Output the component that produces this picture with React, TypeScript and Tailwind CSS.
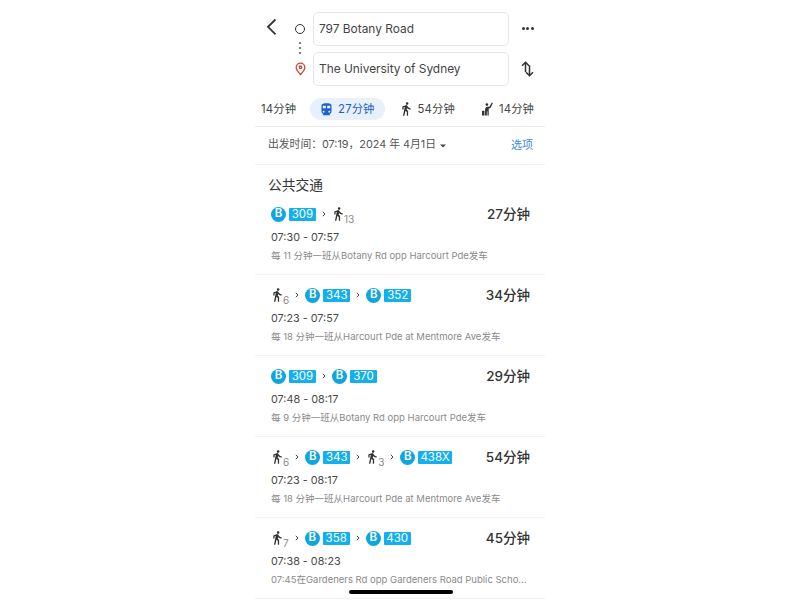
const FONT = "font-['Inter','Noto_Sans_CJK_SC',sans-serif]";

const WALK = "M13.5 5.5c1.1 0 2-.9 2-2s-.9-2-2-2-2 .9-2 2 .9 2 2 2zM9.8 8.9L7 23h2.1l1.8-8 2.1 2v6h2v-7.5l-2.1-2 .6-3C14.8 12 16.8 13 19 13v-2c-1.9 0-3.5-1-4.3-2.4l-1-1.6c-.4-.6-1-1-1.7-1-.3 0-.5.1-.8.1L6 8.3V13h2V9.6l1.8-.7";
const TRAIN = "M12 2c-4 0-8 .5-8 4v9.5C4 17.43 5.57 19 7.5 19L6 20.5v.5h12v-.5L16.5 19c1.93 0 3.5-1.57 3.5-3.5V6c0-3.5-3.58-4-8-4zM7.5 17c-.83 0-1.5-.67-1.5-1.5S6.67 14 7.5 14s1.5.67 1.5 1.5S8.33 17 7.5 17zm3.5-7H6V6h5v4zm2 0V6h5v4h-5zm3.5 7c-.83 0-1.5-.67-1.5-1.5s.67-1.5 1.5-1.5 1.5.67 1.5 1.5-.67 1.5-1.5 1.5z";

function Walk({ className = "" }: { className?: string }) {
  return (
    <svg width="9" height="14" viewBox="5.5 1 14 22.500" fill="#333" preserveAspectRatio="none" className={`shrink-0 ${className}`}>
      <path d={WALK} />
    </svg>
  );
}

function Hail() {
  return (
    <svg width="11" height="14" viewBox="3 1 18 22.500" fill="#333" className="shrink-0">
      <circle cx="11" cy="5" r="2.2" />
      <path d="M19 1.5l1.8.8-3.4 7.6c-.5 1-1.4 1.6-2.5 1.6H14V23h-2v-7h-1v7H8v-9.5c0-2.2 1.3-5 3.5-5h3l.8-.3z" />
      <rect x="3" y="15" width="4" height="8" rx=".6" />
    </svg>
  );
}

function Chevron() {
  return (
    <svg width="4" height="6" viewBox="0 0 4 6" fill="none" stroke="#444" strokeWidth="1" className="shrink-0">
      <path d="M.8 .8 3 3 .8 5.200" />
    </svg>
  );
}

function Bus({ line }: { line: string }) {
  return (
    <div className="flex items-center gap-[3px]">
      <span className="flex h-[15px] w-[15px] items-center justify-center rounded-full bg-[#0fa5e0] text-[11.5px] font-semibold leading-none text-white">B</span>
      <span className="flex h-[13px] min-w-[27px] items-center justify-center rounded-[1px] bg-[#12b0ee] px-[2px] pt-[1px] text-[11.5px] leading-none text-white">{line}</span>
    </div>
  );
}

function WalkStep({ mins }: { mins: string }) {
  return (
    <div className="flex items-start pl-[2px]">
      <Walk className="mt-[2px]" />
      <span className="ml-[1px] mt-[9px] text-[10px] leading-[10px] text-[#8a8a8a]">{mins}</span>
    </div>
  );
}

type Step = { bus: string } | { walk: string };

function Route({ steps, dur, time, sub }: { steps: Step[]; dur: string; time: string; sub: string }) {
  return (
    <div className="h-[81px] shrink-0 border-b border-[#f3f3f3] pl-[16px] pr-[15px]">
      <div className="flex h-[35px] items-center justify-between pt-[5px]">
        <div className="flex items-center gap-[6px]">
          {steps.map((s, i) => (
            <div key={i} className="flex items-center gap-[6px]">
              {i > 0 && <Chevron />}
              {"bus" in s ? <Bus line={s.bus} /> : <WalkStep mins={s.walk} />}
            </div>
          ))}
        </div>
        <span className="mt-[2px] text-[13.5px] font-medium leading-none text-[#333]">{dur}</span>
      </div>
      <div className="text-[10.8px] leading-[18px] text-[#4a4a4a]">{time}</div>
      <div className="mt-[1px] whitespace-nowrap text-[9.5px] leading-[16px] text-[#8a8a8a]">{sub}</div>
    </div>
  );
}

function Field({ value }: { value: string }) {
  return (
    <div className="flex h-[34px] w-[196px] items-center rounded-[5px] border border-[#e6e6e6] pl-[5px] text-[11.9px] text-[#444]">
      {value}
    </div>
  );
}

export default function App() {
  return (
    <div className={`flex h-[600px] w-full justify-center overflow-hidden bg-white ${FONT}`}>
      <div className="relative flex h-[600px] w-[290px] flex-col overflow-hidden">
        <div className="flex h-[98px] shrink-0 pt-[12px]">
          <div className="flex w-[32px] justify-end pt-[6px]">
            <svg width="14" height="18" viewBox="0 0 14 18" fill="none" stroke="#333" strokeWidth="1.8" className="mr-[8px]">
              <path d="M10.5 1.5 3 8.800l7.500 7.500" />
            </svg>
          </div>
          <div className="flex w-[26px] flex-col items-center">
            <div className="mt-[12px] h-[10px] w-[10px] rounded-full border-[1.5px] border-[#333]" />
            <div className="mt-[8px] flex flex-col items-center gap-[3px]">
              <span className="h-[2px] w-[2px] rounded-full bg-[#555]" />
              <span className="h-[2px] w-[2px] rounded-full bg-[#555]" />
              <span className="h-[2px] w-[2px] rounded-full bg-[#555]" />
            </div>
            <svg width="11" height="14" viewBox="0 0 11 13" fill="none" stroke="#d3413a" strokeWidth="1.3" className="mt-[8px]">
              <path d="M5.5 12C3.4 9.700 1.200 7.400 1.200 4.900a4.300 4.300 0 0 1 8.600 0c0 2.500-2.200 4.800-4.300 7.100z" />
              <circle cx="5.500" cy="4.800" r="1.300" />
            </svg>
          </div>
          <div className="flex flex-col gap-[6px]">
            <Field value="797 Botany Road" />
            <Field value="The University of Sydney" />
          </div>
          <div className="flex flex-1 flex-col items-center pl-[1px]">
            <div className="mt-[15px] flex gap-[1.5px]">
              <span className="h-[3px] w-[3px] rounded-full bg-[#333]" />
              <span className="h-[3px] w-[3px] rounded-full bg-[#333]" />
              <span className="h-[3px] w-[3px] rounded-full bg-[#333]" />
            </div>
            <svg width="13" height="16" viewBox="0 0 13 16" fill="none" stroke="#333" strokeWidth="1.5" className="mt-[31px]">
              <path d="M4.500 11V1.500M1 4.800l3.500-3.500L8 4.800M8.500 4.500v10M5 11.200l3.500 3.500 3.500-3.500" />
            </svg>
          </div>
        </div>

        <div className="flex h-[29px] shrink-0 items-start border-b border-[#ececec] pl-[6px] text-[11.3px] tracking-[0.15px] text-[#444]">
          <div className="flex h-[22px] items-center">14分钟</div>
          <div className="ml-[14px] flex h-[22px] items-center gap-[4px] rounded-full bg-[#e8f0fb] pl-[9px] pr-[10px] text-[#1a62c8]">
            <svg width="15" height="15" viewBox="0 0 24 24" fill="#1a62c8" className="shrink-0"><path d={TRAIN} /></svg>
            27分钟
          </div>
          <div className="ml-[17px] flex h-[22px] items-center gap-[7px]"><Walk />54分钟</div>
          <div className="ml-[27px] flex h-[22px] items-center gap-[6px]"><Hail />14分钟</div>
        </div>

        <div className="flex h-[38px] shrink-0 items-center justify-between border-b border-[#f0f0f0] pl-[13px] pr-[12px]">
          <div className="flex items-center gap-[4px] text-[10.8px] text-[#555]">
            出发时间：07:19，2024 年 4月1日
            <svg width="6" height="4" viewBox="0 0 6 4" fill="#444"><path d="M0 .5h6L3 3.500z" /></svg>
          </div>
          <span className="text-[11px] text-[#3f8ae0]">选项</span>
        </div>

        <div className="h-[29px] shrink-0 pl-[13px] pt-[9px] text-[13.75px] leading-[22px] text-[#333]">公共交通</div>

        <Route steps={[{ bus: "309" }, { walk: "13" }]} dur="27分钟" time="07:30 - 07:57" sub="每 11 分钟一班从Botany Rd opp Harcourt Pde发车" />
        <Route steps={[{ walk: "6" }, { bus: "343" }, { bus: "352" }]} dur="34分钟" time="07:23 - 07:57" sub="每 18 分钟一班从Harcourt Pde at Mentmore Ave发车" />
        <Route steps={[{ bus: "309" }, { bus: "370" }]} dur="29分钟" time="07:48 - 08:17" sub="每 9 分钟一班从Botany Rd opp Harcourt Pde发车" />
        <Route steps={[{ walk: "6" }, { bus: "343" }, { walk: "3" }, { bus: "438X" }]} dur="54分钟" time="07:23 - 08:17" sub="每 18 分钟一班从Harcourt Pde at Mentmore Ave发车" />
        <Route steps={[{ walk: "7" }, { bus: "358" }, { bus: "430" }]} dur="45分钟" time="07:38 - 08:23" sub="07:45在Gardeners Rd opp Gardeners Road Public Scho..." />

        <div className="absolute bottom-[6px] left-[94px] h-[4px] w-[104px] rounded-full bg-black" />
      </div>
    </div>
  );
}
